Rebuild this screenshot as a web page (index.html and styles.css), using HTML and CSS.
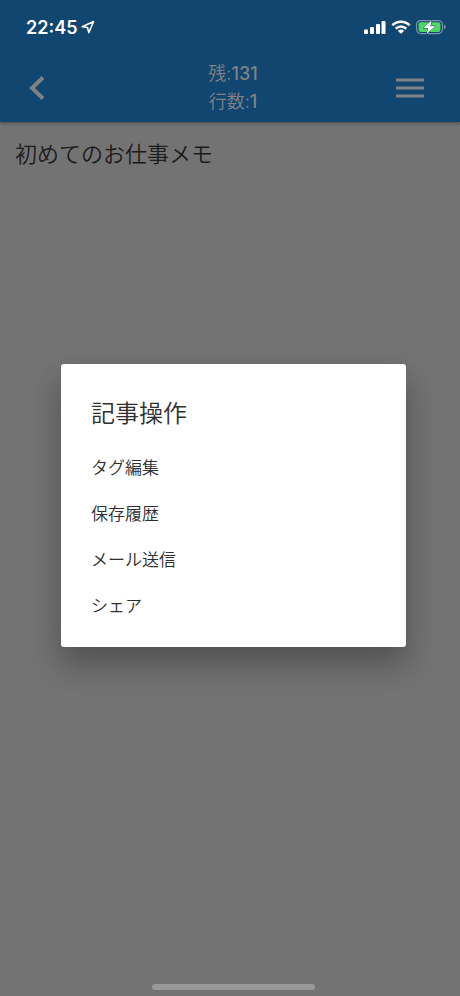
FILE: index.html
```html
<!DOCTYPE html>
<html lang="ja">
<head>
<meta charset="utf-8">
<meta name="viewport" content="width=device-width, initial-scale=1">
<title>お仕事メモ</title>
<link rel="stylesheet" href="styles.css">
</head>
<body>
<div class="screen">
  <header class="header">
    <div class="status">
      <div class="clock">
        <time>22:45</time>
        <svg class="location" viewBox="0 0 14 14" aria-hidden="true"><path d="M12.600 1.500 1.200 6.700 6.500 7.500 7.800 12.600Z" fill="none" stroke="currentColor" stroke-width="1.600" stroke-linejoin="round"/></svg>
      </div>
      <div class="indicators">
        <svg class="signal" viewBox="0 0 22 14" aria-hidden="true"><g fill="currentColor"><rect x="0" y="9.500" width="4" height="4.500" rx="1"/><rect x="6" y="7" width="4" height="7" rx="1"/><rect x="12" y="4" width="4" height="10" rx="1"/><rect x="17.500" y="1" width="4" height="13" rx="1"/></g></svg>
        <svg class="wifi" viewBox="0 0 20 14" aria-hidden="true"><g fill="none" stroke="currentColor" stroke-width="2.600"><path d="M1.400 5.300A12.300 12.300 0 0 1 18.600 5.300"/><path d="M4.700 8.700A7.600 7.600 0 0 1 15.300 8.700"/></g><path d="M10 13.800 6.900 10.900A4.500 4.500 0 0 1 13.100 10.900Z" fill="currentColor"/></svg>
        <svg class="battery" viewBox="0 0 30 16" aria-hidden="true"><rect x=".6" y="1.600" width="25.800" height="13" rx="4" fill="none" stroke="#7895ad" stroke-width="1.200"/><path d="M28 5.500v5q1.800-.8 1.800-2.500T28 5.500Z" fill="#7895ad"/><rect x="2.600" y="3.200" width="21.800" height="9.800" rx="2" fill="#4fd763"/><path d="M15.500 1.500 7.500 9h4.600l-1.300 5.800L19.200 7.200h-4.800Z" fill="#fff" stroke="#10466f" stroke-width="1" paint-order="stroke"/></svg>
      </div>
    </div>
    <div class="toolbar">
      <button class="icon-button" type="button" aria-label="戻る"><svg class="back" viewBox="0 0 16 24" aria-hidden="true"><path d="M14 1.500 3 12l11 10.500" fill="none" stroke="currentColor" stroke-width="4"/></svg></button>
      <div class="counts"><div>残:<b>131</b></div><div>行数:<b>1</b></div></div>
      <button class="icon-button" type="button" aria-label="メニュー"><svg class="menu" viewBox="0 0 28 20" aria-hidden="true"><path d="M0 2h28M0 10h28M0 18h28" stroke="currentColor" stroke-width="3"/></svg></button>
    </div>
  </header>
  <main class="editor"><textarea class="memo" aria-label="メモ">初めてのお仕事メモ</textarea></main>
  <div class="home-area"><div class="home-bar"></div></div>
  <div class="overlay">
    <section class="dialog" role="dialog" aria-modal="true" aria-labelledby="dialog-title">
      <h1 class="title" id="dialog-title">記事操作</h1>
      <ul class="actions">
        <li><button class="action" type="button">タグ編集</button></li>
        <li><button class="action" type="button">保存履歴</button></li>
        <li><button class="action" type="button">メール送信</button></li>
        <li><button class="action" type="button">シェア</button></li>
      </ul>
    </section>
  </div>
</div>
</body>
</html>
```
FILE: styles.css
```css
* { box-sizing: border-box; }
body {
  margin: 0;
  font-family: Inter, "Noto Sans CJK JP", sans-serif;
  background: #737373;
}
button, textarea {
  border: 0;
  padding: 0;
  background: none;
  font: inherit;
  color: inherit;
}
.screen {
  position: relative;
  display: flex;
  flex-direction: column;
  min-height: 100vh;
}
.header {
  background: #10466f;
  color: #7f8285;
  box-shadow: 0 1px 3px rgba(0, 0, 0, .4);
}
.status {
  display: flex;
  justify-content: space-between;
  align-items: center;
  height: 54px;
  padding: 0 14px 0 26px;
  color: #fff;
}
.clock, .indicators { display: flex; align-items: center; }
.clock { gap: 4px; font-size: 18px; font-weight: 600; }
.indicators { gap: 5px; }
.location { width: 14px; height: 14px; }
.signal { width: 22px; height: 14px; }
.wifi { width: 20px; height: 14px; }
.battery { width: 30px; height: 16px; }
.toolbar {
  display: grid;
  grid-template-columns: 74px 1fr 76px;
  align-items: center;
  height: 68px;
  padding-right: 12px;
}
.icon-button {
  display: flex;
  align-items: center;
  justify-content: center;
  height: 48px;
}
.icon-button svg { display: block; }
.back { width: 16px; height: 24px; }
.menu { width: 28px; height: 20px; }
.counts {
  padding-left: 20px;
  text-align: center;
  font-size: 18px;
  font-weight: 350;
  line-height: 28px;
}
.counts b { font-weight: 500; }
.editor {
  display: flex;
  flex: 1;
  padding: 14px 15px;
}
.memo {
  flex: 1;
  min-width: 0;
  resize: none;
  outline: 0;
  font-family: "Noto Sans CJK JP", sans-serif;
  font-size: 22px;
  font-weight: 350;
  line-height: 32px;
  color: #1c1c1c;
}
.home-area {
  display: flex;
  justify-content: center;
  padding: 0 0 6px 7px;
}
.home-bar {
  width: 36%;
  height: 6px;
  border-radius: 3px;
  background: #999;
}
.overlay {
  position: absolute;
  inset: 0;
  display: flex;
  align-items: center;
  padding: 15px 54px 0 61px;
}
.dialog {
  flex: 1;
  padding: 30px 30px 20px;
  border-radius: 3px;
  background: #fff;
  color: #303030;
  font-family: "Noto Sans CJK JP", sans-serif;
  font-weight: 350;
  box-shadow: 0 15px 36px rgba(0, 0, 0, .16), 0 18px 28px rgba(0, 0, 0, .16);
}
.title {
  margin: 0 0 13px;
  font-size: 24px;
  font-weight: inherit;
  line-height: 36px;
}
.actions {
  margin: 0;
  padding: 0;
  list-style: none;
}
.action {
  display: block;
  width: 100%;
  height: 46px;
  font-size: 17px;
  text-align: left;
}
```
